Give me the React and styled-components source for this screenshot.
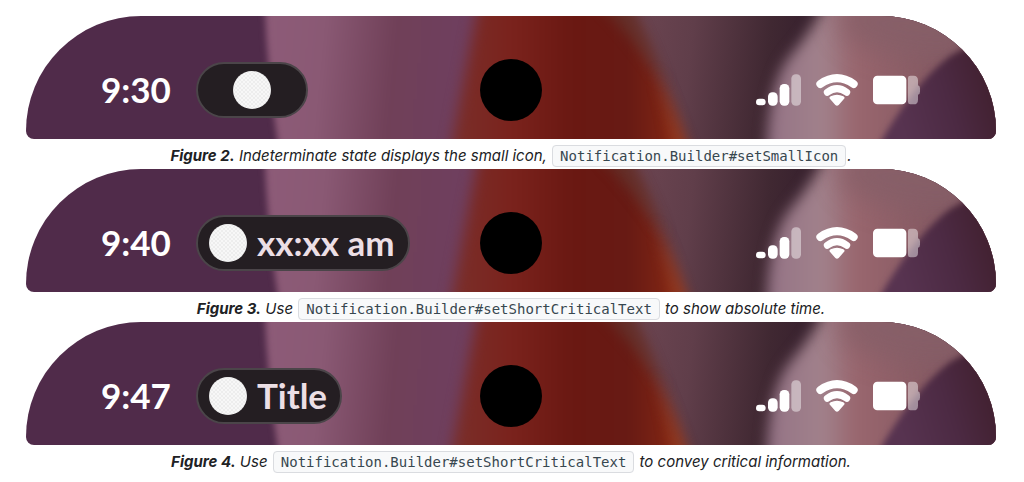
import styled, { createGlobalStyle } from "styled-components";

const figures = [
  {
    id: "fig2",
    number: 2,
    time: "9:30",
    chip: "",
    before: "Indeterminate state displays the small icon, ",
    code: "Notification.Builder#setSmallIcon",
    after: ".",
  },
  {
    id: "fig3",
    number: 3,
    time: "9:40",
    chip: "xx:xx am",
    before: "Use ",
    code: "Notification.Builder#setShortCriticalText",
    after: " to show absolute time.",
  },
  {
    id: "fig4",
    number: 4,
    time: "9:47",
    chip: "Title",
    before: "Use ",
    code: "Notification.Builder#setShortCriticalText",
    after: " to convey critical information.",
  },
];

const Wallpaper = ({ id }) => {
  const url = (name) => `url(#${id}-${name})`;

  return (
    <WallpaperSvg viewBox="0 0 970 123" preserveAspectRatio="none" aria-hidden="true">
      <defs>
        <filter id={`${id}-soft`} x="-20%" y="-30%" width="140%" height="160%" colorInterpolationFilters="sRGB">
          <feGaussianBlur stdDeviation="3" />
        </filter>
        <filter id={`${id}-blur`} x="-20%" y="-30%" width="140%" height="160%" colorInterpolationFilters="sRGB">
          <feGaussianBlur stdDeviation="7" />
        </filter>
        <filter id={`${id}-haze`} x="-20%" y="-40%" width="140%" height="180%" colorInterpolationFilters="sRGB">
          <feGaussianBlur stdDeviation="14" />
        </filter>
        <linearGradient id={`${id}-mauve`} gradientUnits="userSpaceOnUse" x1="240" y1="0" x2="450" y2="20">
          <stop offset="0" stopColor="#8d5b78" />
          <stop offset="0.28" stopColor="#8a5974" />
          <stop offset="0.62" stopColor="#704058" />
          <stop offset="1" stopColor="#6f3f60" />
        </linearGradient>
        <linearGradient id={`${id}-red`} gradientUnits="userSpaceOnUse" x1="430" y1="0" x2="660" y2="0">
          <stop offset="0" stopColor="#7a2e29" />
          <stop offset="0.25" stopColor="#7a221c" />
          <stop offset="0.5" stopColor="#6a1812" />
          <stop offset="0.75" stopColor="#671a14" />
          <stop offset="1" stopColor="#8a2a14" />
        </linearGradient>
        <linearGradient id={`${id}-shade`} gradientUnits="userSpaceOnUse" x1="600" y1="0" x2="770" y2="20">
          <stop offset="0" stopColor="#6e4652" />
          <stop offset="0.4" stopColor="#603e4a" />
          <stop offset="0.85" stopColor="#402832" />
          <stop offset="1" stopColor="#3a232f" />
        </linearGradient>
        <linearGradient id={`${id}-rose`} gradientUnits="userSpaceOnUse" x1="745" y1="0" x2="930" y2="0">
          <stop offset="0" stopColor="#957486" />
          <stop offset="0.28" stopColor="#a1818b" />
          <stop offset="0.46" stopColor="#99666e" />
          <stop offset="1" stopColor="#80565f" />
        </linearGradient>
        <linearGradient id={`${id}-plum`} gradientUnits="userSpaceOnUse" x1="870" y1="90" x2="970" y2="60">
          <stop offset="0" stopColor="#573350" />
          <stop offset="0.5" stopColor="#4c2a43" />
          <stop offset="1" stopColor="#401f2d" />
        </linearGradient>
      </defs>
      <rect width="970" height="123" fill="#502b4a" />
      <path d="M238 -30 L700 -30 L700 160 L257 160 Q240 60 238 -30Z" fill={url("mauve")} filter={url("soft")} />
      <path d="M580 -40 L1000 -40 L1000 170 L640 170Z" fill={url("shade")} />
      <path d="M458 -40 Q440 50 418 170 L668 170 Q640 60 585 -40Z" fill={url("red")} filter={url("blur")} />
      <path d="M545 -40 L590 -40 Q622 20 640 70 Q600 10 545 -40Z" fill="#62362f" opacity="0.7" filter={url("blur")} />
      <path d="M628 50 Q648 90 668 150 L650 150 Q642 90 628 50Z" fill="#a1401c" opacity="0.7" filter={url("blur")} />
      <path d="M812 -40 Q794 6 764 40 Q738 72 741 160 L980 160 L980 -40Z" fill={url("rose")} filter={url("blur")} />
      <path d="M820 -20 L960 -20 L940 44 Q880 48 838 30 Q800 20 820 -20Z" fill="#865f68" opacity="0.85" filter={url("haze")} />
      <path d="M842 150 Q880 74 924 40 L990 4 L990 160Z" fill={url("plum")} filter={url("soft")} />
    </WallpaperSvg>
  );
};

const StatusIcons = () => (
  <Icons>
    <svg width="45" height="32" viewBox="30 41 135 96" fill="#fff" role="img" aria-label="Signal">
      <rect x="30" y="115" width="29" height="20" rx="10" />
      <rect x="66" y="96" width="29" height="40" rx="13" />
      <rect x="101" y="71" width="29" height="65" rx="13" />
      <rect x="136" y="42" width="29" height="94" rx="13" opacity="0.45" />
    </svg>
    <svg width="42" height="32" viewBox="212 41 126 96" fill="none" role="img" aria-label="Wi-Fi">
      <path d="M225 71 Q275 36 325 71" stroke="#fff" strokeWidth="24" strokeLinecap="round" />
      <path d="M246 96 Q275 74 304 96" stroke="#fff" strokeWidth="21" strokeLinecap="round" />
      <path d="M255 117 Q249 112 256 108 Q275 98 294 108 Q301 112 295 117 L280 134 Q275 138 270 134Z" fill="#fff" />
    </svg>
    <svg width="47" height="32" viewBox="384 41 141 96" fill="#fff" role="img" aria-label="Battery">
      <rect x="384" y="46" width="100" height="86" rx="13" />
      <path
        d="M496 46 H506 Q519 46 519 60 V75 Q525 76 525 84 V94 Q525 102 519 103 V118 Q519 132 506 132 H496 Q489 132 489 125 V53 Q489 46 496 46Z"
        opacity="0.45"
      />
    </svg>
  </Icons>
);

const App = () => {
  return (
    <>
      <GlobalStyle />
      <Page>
        {figures.map((figure) => (
          <Figure key={figure.id}>
            <StatusBar>
              <Wallpaper id={figure.id} />
              <StartGroup>
                <Clock>{figure.time}</Clock>
                <Chip $iconOnly={!figure.chip}>
                  <ChipIcon />
                  {figure.chip && <ChipText>{figure.chip}</ChipText>}
                </Chip>
              </StartGroup>
              <Camera />
              <StatusIcons />
            </StatusBar>
            <Caption>
              <strong>Figure {figure.number}.</strong> {figure.before}
              <Code>{figure.code}</Code>
              {figure.after}
            </Caption>
          </Figure>
        ))}
      </Page>
    </>
  );
};

export default App;

const GlobalStyle = createGlobalStyle`
  * {
    box-sizing: border-box;
  }
  body {
    margin: 0;
    background: #fff;
    color: #202124;
    font-family: Inter, "Liberation Sans", sans-serif;
  }
`

const Page = styled.main`
  padding: 16px 28px 0 26px;
`

const Figure = styled.figure`
  margin: 0;
`

const StatusBar = styled.div`
  position: relative;
  display: grid;
  grid-template-columns: 1fr auto 1fr;
  align-items: center;
  padding: 43px 76px 18px 75px;
  border-radius: 115px 115px 8px 8px;
  overflow: hidden;
  isolation: isolate;
`

const WallpaperSvg = styled.svg`
  position: absolute;
  inset: 0;
  z-index: -1;
  width: 100%;
  height: 100%;
`

const StartGroup = styled.div`
  display: flex;
  align-items: center;
  gap: 25px;
`

const Clock = styled.time`
  padding-bottom: 2px;
  color: #fff;
  font-family: Lato, sans-serif;
  font-size: 35px;
  font-weight: 700;
  line-height: 40px;
`

const Chip = styled.div`
  display: flex;
  align-items: center;
  justify-content: center;
  gap: 10px;
  height: 56px;
  padding: ${(props) => (props.$iconOnly ? "0 35px" : "0 13px 0 11px")};
  border: 2px solid #4b4549;
  border-radius: 28px;
  background: #241e22;
`

const ChipText = styled.span`
  padding-bottom: 2px;
  color: #ecdfe5;
  font-family: Lato, sans-serif;
  font-size: 35px;
  font-weight: 700;
  line-height: 40px;
  white-space: nowrap;
`

const ChipIcon = styled.span`
  flex: none;
  width: 38px;
  height: 38px;
  border-radius: 50%;
  background: repeating-conic-gradient(#ededed 0 25%, #f7f7f7 0 50%) 0 0 / 4px 4px;
`

const Camera = styled.div`
  width: 62px;
  height: 62px;
  border-radius: 50%;
  background: #000;
`

const Icons = styled.div`
  display: flex;
  align-items: center;
  justify-content: flex-end;
  gap: 15px;
`

const Caption = styled.figcaption`
  padding: 5px 0 1px;
  font-size: 15px;
  font-style: italic;
  line-height: 24px;
  text-align: center;
`

const Code = styled.code`
  margin: 0 1px;
  padding: 2px 7px;
  border: 1px solid #dadce0;
  border-radius: 4px;
  background: #f8f9fa;
  color: #37474f;
  font-family: "DejaVu Sans Mono", monospace;
  font-size: 14px;
  font-style: normal;
  line-height: 16px;
`
